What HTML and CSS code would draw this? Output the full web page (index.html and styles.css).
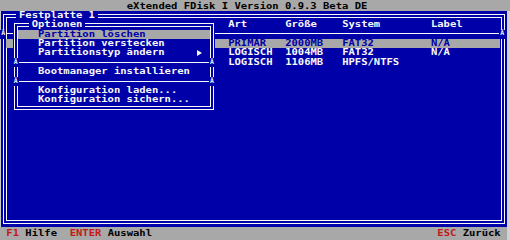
FILE: index.html
```html
<!DOCTYPE html>
<html lang="de">
<head>
<meta charset="utf-8">
<title>eXtended FDisk</title>
<link rel="stylesheet" href="styles.css">
</head>
<body>
<div class="screen">
  <div class="titlebar"><span class="t">eXtended FDisk I Version 0.9.3 Beta DE</span></div>
  <div class="desk">
    <div class="frame win-frame"></div>
    <div class="title win-title"><span class="t">Festplatte 1</span></div>
    <div class="lrow head"><span>Art</span><span>Größe</span><span>System</span><span>Label</span></div>
    <div class="sep win-sep"><span class="junc">Â</span><span class="rule"></span><span class="junc">Â</span></div>
    <div class="lrow sel r4"><span>PRIMAR</span><span>2000MB</span><span>FAT32</span><span>N/A</span></div>
    <div class="lrow r5"><span>LOGISCH</span><span>1004MB</span><span>FAT32</span><span>N/A</span></div>
    <div class="lrow r6"><span>LOGISCH</span><span>1106MB</span><span>HPFS/NTFS</span><span></span></div>

    <div class="menu">
      <div class="frame menu-frame"></div>
      <div class="title menu-title"><span class="t">Optionen</span></div>
      <div class="item sel m2"><span class="t">Partition löschen</span></div>
      <div class="item m3"><span class="t">Partition verstecken</span></div>
      <div class="item m4"><span class="t">Partitionstyp ändern</span><svg class="arrow" width="5" height="6" viewBox="0 0 5 6"><polygon points="0,0 5,3 0,6" fill="#f8f8f8"/></svg></div>
      <div class="sep m5"><span class="junc">Â</span><span class="rule"></span><span class="junc">Â</span></div>
      <div class="item m6"><span class="t">Bootmanager installieren</span></div>
      <div class="sep m7"><span class="junc">Â</span><span class="rule"></span><span class="junc">Â</span></div>
      <div class="item m8"><span class="t">Konfiguration laden...</span></div>
      <div class="item m9"><span class="t">Konfiguration sichern...</span></div>
    </div>
  </div>
  <div class="status">
    <span class="t"><b class="key">F1</b> Hilfe  <b class="key">ENTER</b> Auswahl</span>
    <span class="t"><b class="key">ESC</b> Zurück</span>
  </div>
</div>
</body>
</html>
```
FILE: styles.css
```css
:root {
  --cw: 6.3375px;
  --rh: 9.37px;
  --sy: 0.78;
  --blue: #0000a8;
  --gray: #a8a8a8;
  --white: #f8f8f8;
  --red: #c41818;
}
* { box-sizing: border-box; }
html, body { margin: 0; padding: 0; }
body {
  width: 510px;
  height: 240px;
  overflow: hidden;
  background: #d2d2d2;
  font-family: "DejaVu Sans Mono", "Liberation Mono", monospace;
  font-weight: 700;
  font-size: 10.53px;
  line-height: var(--rh);
}
.t {
  display: inline-block;
  transform: scaleY(var(--sy));
  white-space: pre;
}
.screen {
  display: flex;
  flex-direction: column;
  width: 510px;
  height: 240px;
}
.titlebar {
  height: 11px;
  flex: none;
  background: var(--gray);
  color: #000;
  line-height: 11px;
  padding-left: calc(20 * var(--cw));
  padding-top: 0.5px;
  white-space: pre;
}
.desk {
  flex: none;
  width: 507px;
  height: calc(23 * var(--rh));
  background: var(--blue);
  color: var(--white);
  display: grid;
  grid-template-columns: repeat(80, var(--cw));
  grid-template-rows: repeat(23, var(--rh));
  box-shadow: inset 1px 0 0 #c8c8c8;
}
.status {
  flex: 1;
  width: 507px;
  background: var(--gray);
  color: #000;
  display: flex;
  justify-content: space-between;
  align-items: center;
  padding: 1px var(--cw) 0;
  line-height: 11px;
  white-space: pre;
}
.key { color: var(--red); font-weight: 700; }

.frame { border: 4px double var(--white); }
.title {
  justify-self: start;
  background: var(--blue);
  padding: 0 3px;
  margin-left: -3px;
  white-space: pre;
}

.win-frame { grid-row: 1 / 24; grid-column: 1 / 81; margin: 3px 1px 2.5px 3px; }
.win-title { grid-row: 1; grid-column: 4 / 16; }

.lrow {
  grid-column: 2 / 80;
  display: grid;
  grid-template-columns: calc(35 * var(--cw)) calc(9 * var(--cw)) calc(9 * var(--cw)) calc(14 * var(--cw)) 1fr;
  white-space: pre;
}
.lrow > span { transform: scaleY(var(--sy)); }
.lrow > :first-child { grid-column: 2; }
.lrow.head { grid-row: 2; }
.lrow.r4 { grid-row: 4; }
.lrow.r5 { grid-row: 5; }
.lrow.r6 { grid-row: 6; }
.sel { background: var(--gray); color: var(--blue); }

.sep { display: flex; }
.win-sep { grid-row: 3; grid-column: 1 / 81; }
.junc {
  width: var(--cw);
  flex: none;
  background: var(--blue);
  color: var(--white);
  font-size: 6.5px;
  line-height: 7px;
  text-align: center;
}
.rule {
  flex: 1;
  height: 0;
  border-top: 1px solid var(--white);
  margin-top: 3px;
}
.win-sep .junc:last-child { margin-right: 1px; }

.menu {
  grid-row: 2 / 12;
  grid-column: 3 / 35;
  background: var(--blue);
  display: grid;
  grid-template-columns: repeat(32, var(--cw));
  grid-template-rows: repeat(10, var(--rh));
}
.menu-frame { grid-row: 1 / 11; grid-column: 1 / 33; margin: 2.6px 1px 4px 1.3px; }
.menu-title { grid-row: 1; grid-column: 4 / 14; }
.item {
  grid-column: 2 / 32;
  display: flex;
  align-items: center;
  padding-left: calc(3 * var(--cw));
  white-space: pre;
}
.item.sel { margin: 0 -1.4px 0 -1px; padding-left: calc(3 * var(--cw) + 1px); }
.arrow { margin-left: auto; margin-right: calc(var(--cw) + 1px); }
.menu .sep { grid-column: 1 / 33; }
.menu .sep .rule { margin-top: 4.5px; }
.menu .sep .junc { padding-top: 1.5px; }
.m2 { grid-row: 2; }
.m3 { grid-row: 3; }
.m4 { grid-row: 4; }
.m5 { grid-row: 5; }
.m6 { grid-row: 6; }
.m7 { grid-row: 7; }
.m8 { grid-row: 8; }
.m9 { grid-row: 9; }
```
